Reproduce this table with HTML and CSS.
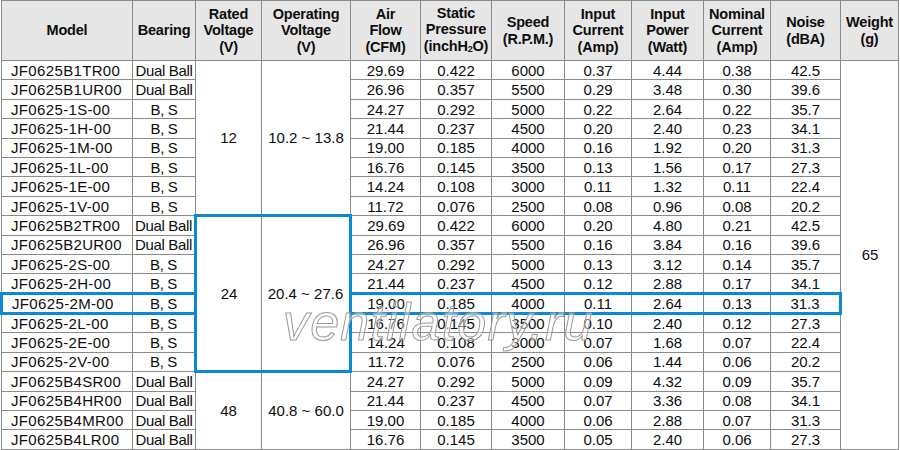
FILE: index.html
```html
<!DOCTYPE html>
<html>
<head>
<meta charset="utf-8">
<link rel="stylesheet" href="styles.css">
</head>
<body>
<div class="sheet">
<table class="spec">
<colgroup>
<col class="c-model"><col class="c-bear"><col class="c-rated"><col class="c-op"><col class="c-air"><col class="c-sp"><col class="c-speed"><col class="c-ic"><col class="c-ip"><col class="c-nc"><col class="c-noise"><col class="c-w">
</colgroup>
<thead>
<tr>
<th>Model</th><th>Bearing</th><th>Rated<br>Voltage<br>(V)</th><th>Operating<br>Voltage<br>(V)</th><th>Air<br>Flow<br>(CFM)</th><th>Static<br>Pressure<br>(inchH<sub>2</sub>O)</th><th>Speed<br>(R.P.M.)</th><th>Input<br>Current<br>(Amp)</th><th>Input<br>Power<br>(Watt)</th><th>Nominal<br>Current<br>(Amp)</th><th>Noise<br>(dBA)</th><th>Weight<br>(g)</th>
</tr>
</thead>
<tbody>
<tr><td class="model">JF0625B1TR00</td><td class="bear">Dual Ball</td><td rowspan="8">12</td><td rowspan="8">10.2 ~ 13.8</td><td>29.69</td><td>0.422</td><td>6000</td><td>0.37</td><td>4.44</td><td>0.38</td><td>42.5</td><td rowspan="20" class="weight">65</td></tr>
<tr><td class="model">JF0625B1UR00</td><td class="bear">Dual Ball</td><td>26.96</td><td>0.357</td><td>5500</td><td>0.29</td><td>3.48</td><td>0.30</td><td>39.6</td></tr>
<tr><td class="model">JF0625-1S-00</td><td class="bear">B, S</td><td>24.27</td><td>0.292</td><td>5000</td><td>0.22</td><td>2.64</td><td>0.22</td><td>35.7</td></tr>
<tr><td class="model">JF0625-1H-00</td><td class="bear">B, S</td><td>21.44</td><td>0.237</td><td>4500</td><td>0.20</td><td>2.40</td><td>0.23</td><td>34.1</td></tr>
<tr><td class="model">JF0625-1M-00</td><td class="bear">B, S</td><td>19.00</td><td>0.185</td><td>4000</td><td>0.16</td><td>1.92</td><td>0.20</td><td>31.3</td></tr>
<tr><td class="model">JF0625-1L-00</td><td class="bear">B, S</td><td>16.76</td><td>0.145</td><td>3500</td><td>0.13</td><td>1.56</td><td>0.17</td><td>27.3</td></tr>
<tr><td class="model">JF0625-1E-00</td><td class="bear">B, S</td><td>14.24</td><td>0.108</td><td>3000</td><td>0.11</td><td>1.32</td><td>0.11</td><td>22.4</td></tr>
<tr><td class="model">JF0625-1V-00</td><td class="bear">B, S</td><td>11.72</td><td>0.076</td><td>2500</td><td>0.08</td><td>0.96</td><td>0.08</td><td>20.2</td></tr>
<tr><td class="model">JF0625B2TR00</td><td class="bear">Dual Ball</td><td rowspan="8" class="grp grp-l">24</td><td rowspan="8" class="grp grp-r">20.4 ~ 27.6</td><td>29.69</td><td>0.422</td><td>6000</td><td>0.20</td><td>4.80</td><td>0.21</td><td>42.5</td></tr>
<tr><td class="model">JF0625B2UR00</td><td class="bear">Dual Ball</td><td>26.96</td><td>0.357</td><td>5500</td><td>0.16</td><td>3.84</td><td>0.16</td><td>39.6</td></tr>
<tr><td class="model">JF0625-2S-00</td><td class="bear">B, S</td><td>24.27</td><td>0.292</td><td>5000</td><td>0.13</td><td>3.12</td><td>0.14</td><td>35.7</td></tr>
<tr><td class="model">JF0625-2H-00</td><td class="bear">B, S</td><td>21.44</td><td>0.237</td><td>4500</td><td>0.12</td><td>2.88</td><td>0.17</td><td>34.1</td></tr>
<tr class="sel"><td class="model first">JF0625-2M-00</td><td class="bear">B, S</td><td>19.00</td><td>0.185</td><td>4000</td><td>0.11</td><td>2.64</td><td>0.13</td><td class="last">31.3</td></tr>
<tr><td class="model">JF0625-2L-00</td><td class="bear">B, S</td><td>16.76</td><td>0.145</td><td>3500</td><td>0.10</td><td>2.40</td><td>0.12</td><td>27.3</td></tr>
<tr><td class="model">JF0625-2E-00</td><td class="bear">B, S</td><td>14.24</td><td>0.108</td><td>3000</td><td>0.07</td><td>1.68</td><td>0.07</td><td>22.4</td></tr>
<tr><td class="model">JF0625-2V-00</td><td class="bear">B, S</td><td>11.72</td><td>0.076</td><td>2500</td><td>0.06</td><td>1.44</td><td>0.06</td><td>20.2</td></tr>
<tr><td class="model">JF0625B4SR00</td><td class="bear">Dual Ball</td><td rowspan="4">48</td><td rowspan="4">40.8 ~ 60.0</td><td>24.27</td><td>0.292</td><td>5000</td><td>0.09</td><td>4.32</td><td>0.09</td><td>35.7</td></tr>
<tr><td class="model">JF0625B4HR00</td><td class="bear">Dual Ball</td><td>21.44</td><td>0.237</td><td>4500</td><td>0.07</td><td>3.36</td><td>0.08</td><td>34.1</td></tr>
<tr><td class="model">JF0625B4MR00</td><td class="bear">Dual Ball</td><td>19.00</td><td>0.185</td><td>4000</td><td>0.06</td><td>2.88</td><td>0.07</td><td>31.3</td></tr>
<tr><td class="model">JF0625B4LR00</td><td class="bear">Dual Ball</td><td>16.76</td><td>0.145</td><td>3500</td><td>0.05</td><td>2.40</td><td>0.06</td><td>27.3</td></tr>
</tbody>
</table>
<div class="watermark">ventilatory.ru</div>
</div>
</body>
</html>
```
FILE: styles.css
```css
html, body {
  margin: 0;
  padding: 0;
  background: #ffffff;
}
body {
  font-family: "Liberation Sans", Arial, Helvetica, sans-serif;
  color: #0d0d0d;
  width: 900px;
  height: 450px;
  overflow: hidden;
}
.sheet {
  position: relative;
  width: 900px;
  height: 450px;
}
.spec {
  border-collapse: collapse;
  table-layout: fixed;
  width: 899px;
}
.c-model { width: 131px; }
.c-bear { width: 63px; }
.c-rated { width: 66px; }
.c-op { width: 89px; }
.c-air { width: 70px; }
.c-sp { width: 71px; }
.c-speed { width: 73px; }
.c-ic { width: 67px; }
.c-ip { width: 72px; }
.c-nc { width: 67px; }
.c-noise { width: 70px; }
.c-w { width: 58px; }

.spec th, .spec td {
  border: 1px solid #8a8a8a;
  padding: 0;
  text-align: center;
  vertical-align: middle;
  overflow: hidden;
  white-space: nowrap;
}
.spec thead tr { height: 60px; }
.spec th {
  background: #e6e6e6;
  font-weight: bold;
  font-size: 14.5px;
  line-height: 16.5px;
  letter-spacing: -0.2px;
}
.spec th sub {
  font-size: 9px;
  vertical-align: baseline;
  position: relative;
  top: 1px;
}
.spec tbody tr { height: 19.42px; }
.spec td {
  font-size: 15px;
  line-height: 17px;
}
.spec td.model {
  text-align: left;
  padding-left: 9px;
  letter-spacing: 0.35px;
}
.spec td.bear {
  letter-spacing: -0.35px;
}
.spec td.grp {
  border-top: 3px solid #0a8ad6;
  border-bottom: 3px solid #0a8ad6;
}
.spec td.grp-l { border-left: 3px solid #0a8ad6; }
.spec td.grp-r { border-right: 3px solid #0a8ad6; }
.spec tr.sel td {
  border-top: 3px solid #0a8ad6;
  border-bottom: 3px solid #0a8ad6;
}
.spec tr.sel td.first { border-left: 3px solid #0a8ad6; }
.spec tr.sel td.last { border-right: 3px solid #0a8ad6; }

.watermark {
  position: absolute;
  left: 283px;
  top: 293px;
  font-family: "Liberation Sans", Arial, sans-serif;
  font-style: italic;
  font-size: 52px;
  line-height: 58px;
  letter-spacing: 1.2px;
  color: rgba(255, 255, 255, 0.45);
  -webkit-text-stroke: 1px #9a9a9a;
  pointer-events: none;
}
```
